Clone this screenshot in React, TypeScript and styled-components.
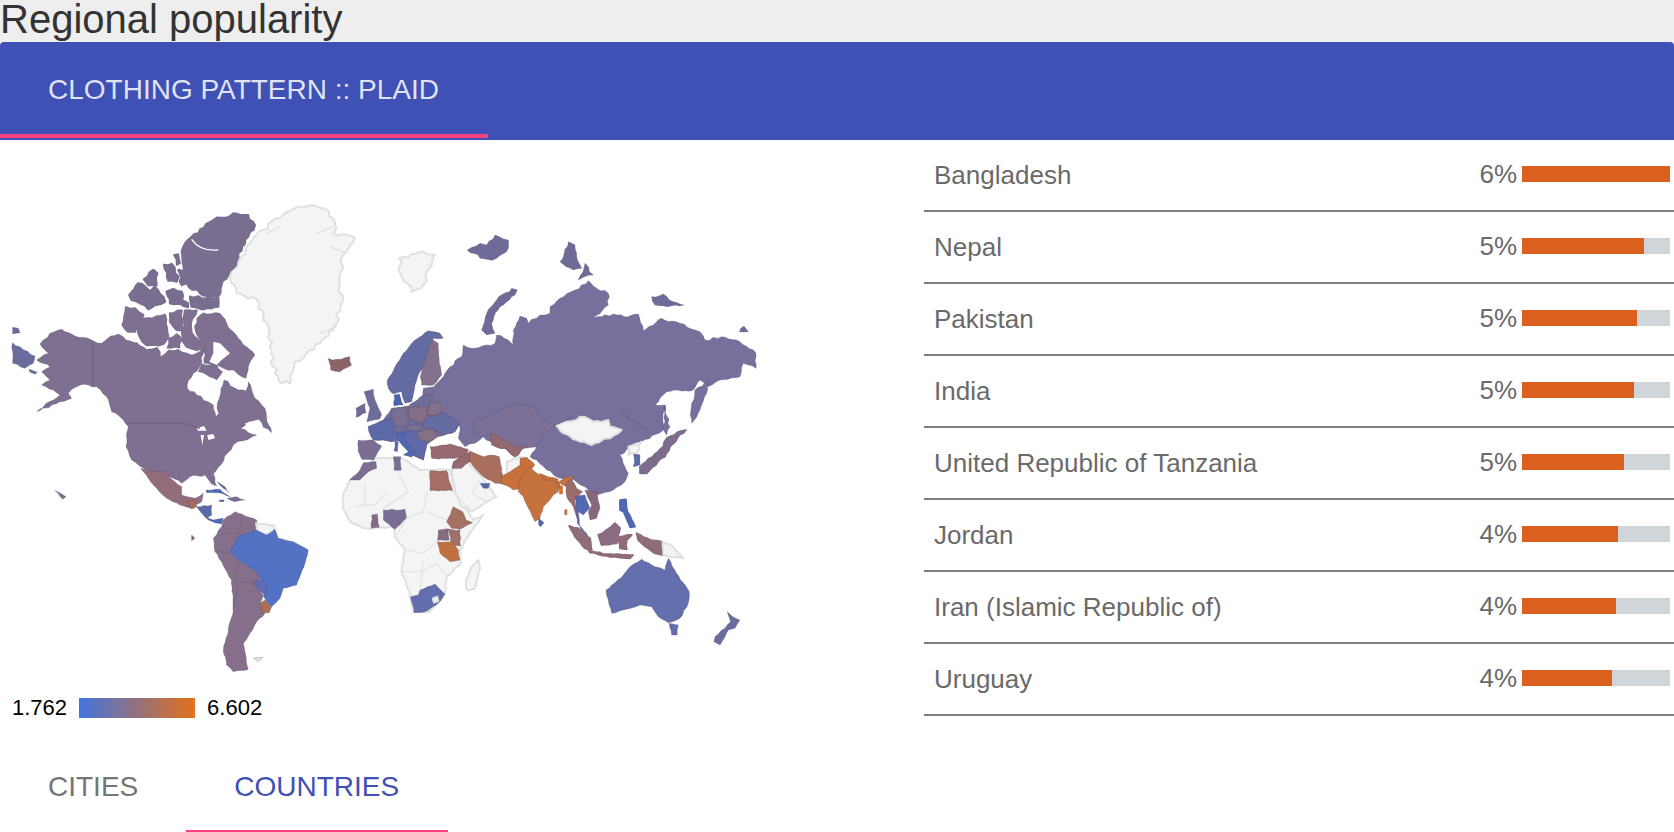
import React, { useState } from 'react';
import styled, { createGlobalStyle } from 'styled-components';

const GlobalStyle = createGlobalStyle`
  html, body {
    margin: 0;
    padding: 0;
    background: #fff;
    font-family: "Liberation Sans", Arial, sans-serif;
  }
`;

// each frame is the crop the outlines were traced on, coordinates are 3x page px
const frames: Record<string, [number, number]> = {
  A: [0, 190],
  B: [380, 190],
  C: [0, 470],
  D: [340, 440],
  E: [340, 320],
  F: [440, 420],
  G: [130, 450],
};

const NONE = '#f4f4f4';

type Shape = { at: string; fill: string; d: string; jag?: number; grow?: number };

// break the straight edges up so the coasts look like coasts
const roughen = (d: string, amp: number) => {
  const nums = (d.match(/-?\d+(\.\d+)?/g) || []).map(Number);
  const pts: [number, number][] = [];
  for (let i = 0; i < nums.length; i += 2) pts.push([nums[i], nums[i + 1]]);
  let seed = nums.length;
  const noise = () => {
    seed += 1;
    const v = Math.sin(seed * 12.9898) * 43758.5453;
    return (v - Math.floor(v) - 0.5) * 2;
  };
  const out: string[] = [];
  pts.forEach(([x, y], i) => {
    const [nx, ny] = pts[(i + 1) % pts.length];
    const len = Math.hypot(nx - x, ny - y);
    const steps = Math.max(1, Math.floor(len / 11));
    for (let k = 0; k < steps; k++) {
      const t = k / steps;
      const off = k === 0 ? 0 : noise() * amp;
      out.push(`${(x + (nx - x) * t + (-(ny - y) / len) * off).toFixed(1)} ${(y + (ny - y) * t + ((nx - x) / len) * off).toFixed(1)}`);
    }
  });
  return `M${out.join(' L')} Z`;
};

const land: Shape[] = [
  // Greenland and Svalbard
  { at: 'A', fill: NONE, jag: 7, d: 'M695 250 L725 200 L750 160 L790 120 L850 75 L900 50 L975 55 L1005 100 L1000 130 L1065 145 L1030 195 L1020 280 L1025 340 L1000 420 L960 460 L920 490 L885 515 L870 580 L845 580 L825 550 L815 480 L800 400 L770 330 L710 310 L695 280 Z' },
  { at: 'B', fill: NONE, jag: 7, d: 'M58 205 L120 185 L165 195 L140 245 L130 285 L95 305 L60 250 Z' },
  // North America
  { at: 'A', fill: '#7f7091', d: 'M185 418 L215 432 L280 452 L305 460 L322 446 L355 432 L378 450 L412 458 L440 478 L472 472 L482 500 L505 480 L535 478 L575 495 L600 484 L612 470 L606 515 L592 542 L565 572 L562 595 L590 615 L625 635 L640 645 L648 680 L656 670 L652 640 L662 610 L672 570 L715 600 L738 602 L745 575 L765 625 L795 655 L800 682 L815 728 L790 712 L775 688 L745 695 L722 716 L770 735 L730 752 L700 765 L682 790 L665 822 L640 852 L650 888 L635 882 L615 855 L570 860 L545 880 L510 860 L470 855 L430 835 L395 810 L378 770 L385 710 L370 690 L335 665 L320 620 L290 590 L265 585 L230 590 L205 610 L215 625 L180 635 L110 665 L180 615 L160 600 L125 585 L150 570 L125 545 L150 530 L110 510 L145 490 L120 462 L150 430 Z' },
  { at: 'A', fill: '#7f7091', d: 'M590 385 L610 368 L660 370 L700 425 L740 470 L765 495 L745 530 L738 565 L700 540 L670 535 L640 525 L612 520 L612 470 L585 420 Z' },
  { at: 'A', fill: '#7f7091', d: 'M605 520 L650 525 L668 545 L650 570 L620 555 L595 545 Z' },
  { at: 'A', fill: '#7a6e90', jag: 6, grow: 6, d: 'M575 140 L600 118 L640 90 L700 70 L745 75 L765 105 L745 140 L715 190 L700 235 L665 285 L655 320 L600 310 L560 280 L545 185 Z' },
  { at: 'A', fill: '#7a6e90', grow: 7, d: 'M570 320 L655 325 L655 350 L610 358 L575 350 Z' },
  { at: 'A', fill: '#7a6e90', grow: 7, d: 'M492 225 L515 222 L535 260 L530 275 L505 272 Z' },
  { at: 'A', fill: '#7a6e90', grow: 7, d: 'M535 240 L555 245 L572 280 L545 285 Z' },
  { at: 'A', fill: '#7a6e90', grow: 5, d: 'M522 195 L535 192 L540 220 L530 225 Z' },
  { at: 'A', fill: '#7a6e90', grow: 7, d: 'M432 268 L460 240 L472 250 L470 285 L445 285 Z' },
  { at: 'A', fill: '#7a6e90', grow: 7, d: 'M388 315 L415 280 L435 290 L450 305 L465 290 L495 335 L465 345 L445 358 L420 340 L395 330 Z' },
  { at: 'A', fill: '#7a6e90', grow: 7, d: 'M500 305 L520 297 L545 305 L550 345 L510 340 Z' },
  { at: 'A', fill: '#7a6e90', grow: 5, d: 'M548 330 L565 340 L565 352 L548 348 Z' },
  { at: 'A', fill: '#7f7091', grow: 7, d: 'M378 352 L405 355 L430 375 L405 425 L385 425 L368 405 Z' },
  { at: 'A', fill: '#7f7091', grow: 7, d: 'M415 390 L445 385 L495 375 L505 440 L490 462 L440 465 L415 430 Z' },
  { at: 'A', fill: '#7f7091', grow: 7, d: 'M510 370 L545 362 L550 420 L530 420 L510 395 Z' },
  { at: 'A', fill: '#7f7091', grow: 7, d: 'M555 362 L590 362 L572 400 L575 430 L612 470 L590 480 L560 470 L548 440 Z' },
  { at: 'A', fill: '#7f7091', d: 'M505 445 L530 430 L548 450 L540 475 L500 475 Z' },
  { at: 'A', fill: '#6a6c9e', d: 'M38 458 L60 470 L105 498 L100 520 L75 535 L38 520 Z' },
  { at: 'A', fill: '#6a6c9e', d: 'M38 412 L55 415 L60 428 L38 432 Z' },
  { at: 'A', fill: '#6a6c9e', d: 'M88 537 L112 547 L105 553 L88 545 Z' },
  { at: 'A', fill: '#8c6468', d: 'M985 505 L1010 508 L1050 500 L1055 525 L1020 545 L992 540 Z' },
  // Africa and Arabia, no data
  { at: 'D', fill: NONE, d: 'M30 120 L110 55 L185 55 L240 90 L330 90 L345 155 L400 240 L430 225 L400 265 L360 330 L362 370 L320 410 L315 460 L270 515 L220 515 L205 450 L185 395 L195 330 L165 290 L160 260 L100 265 L70 265 L30 245 L8 205 L10 160 Z' },
  { at: 'D', fill: NONE, d: 'M335 90 L370 55 L415 100 L470 170 L440 185 L395 215 L365 200 L345 155 Z' },
  { at: 'D', fill: NONE, d: 'M378 445 L378 420 L395 380 L415 360 L420 385 L405 445 L385 452 Z' },
  { at: 'D', fill: '#a66e64', d: 'M270 92 L320 92 L338 152 L270 152 Z' },
  { at: 'D', fill: '#7b6e96', d: 'M130 210 L195 208 L200 235 L165 268 L130 240 Z' },
  { at: 'D', fill: '#846c88', d: 'M95 225 L112 222 L118 262 L94 265 Z' },
  { at: 'D', fill: '#a4705f', d: 'M320 245 L340 200 L368 215 L378 240 L398 248 L360 268 L335 265 Z' },
  { at: 'D', fill: '#a17068', d: 'M325 268 L360 270 L362 318 L335 318 Z' },
  { at: 'D', fill: '#856c80', d: 'M295 270 L325 266 L328 300 L292 302 Z' },
  { at: 'D', fill: '#c0713f', d: 'M292 305 L335 305 L355 330 L360 360 L330 365 L300 340 Z' },
  { at: 'D', fill: '#636eae', d: 'M212 470 L235 465 L240 450 L285 432 L315 462 L295 490 L255 515 L222 518 Z' },
  { at: 'D', fill: NONE, d: 'M278 475 L292 470 L295 483 L282 488 Z' },
  // Europe, the ground under the countries
  { at: 'E', fill: '#6e6d9a', d: 'M85 320 L130 300 L155 265 L205 258 L250 225 L300 200 L330 300 L358 310 L345 335 L290 350 L260 375 L250 420 L215 405 L190 360 L155 365 L130 360 L100 360 Z' },
  // Eurasia
  { at: 'B', fill: '#78709c', d: 'M165 585 L210 530 L245 500 L250 465 L285 475 L345 460 L350 435 L385 450 L400 465 L400 420 L420 378 L440 385 L445 400 L480 375 L510 370 L510 350 L540 325 L585 300 L625 272 L650 295 L685 310 L685 345 L640 385 L700 372 L745 380 L775 372 L790 422 L845 385 L900 400 L960 425 L975 450 L1025 440 L1080 455 L1128 490 L1128 535 L1090 520 L1080 560 L1020 570 L985 590 L960 570 L940 600 L860 605 L825 645 L855 645 L850 720 L785 755 L750 770 L720 795 L735 830 L745 850 L735 875 L700 900 L650 915 L625 900 L580 868 L540 865 L500 840 L470 810 L450 800 L470 770 L430 775 L405 800 L375 775 L340 765 L310 740 L285 760 L255 770 L235 745 L240 710 L190 670 L175 640 L150 620 Z' },
  { at: 'B', fill: '#7d7097', d: 'M275 695 L330 680 L365 655 L420 640 L460 650 L480 680 L525 705 L490 730 L470 770 L430 775 L405 800 L375 775 L340 765 L330 730 L300 740 Z' },
  { at: 'B', fill: '#93696f', d: 'M330 735 L345 730 L370 750 L410 770 L440 765 L405 802 L375 775 L335 765 Z' },
  { at: 'B', fill: NONE, d: 'M528 705 L590 690 L600 680 L640 695 L685 690 L690 710 L725 720 L690 745 L635 765 L600 755 L550 730 Z' },
  { at: 'B', fill: '#78709c', d: 'M935 640 L945 600 L985 570 L980 610 L960 660 L935 700 Z' },
  { at: 'B', fill: '#7e6c8c', grow: 5, d: 'M780 830 L850 770 L860 745 L918 720 L870 770 L855 800 L800 850 L780 850 Z' },
  { at: 'B', fill: '#78709c', d: 'M855 645 L870 710 L860 735 L850 720 Z' },
  { at: 'B', fill: '#5a6aaa', d: 'M760 790 L780 795 L780 825 L760 830 Z' },
  { at: 'B', fill: NONE, d: 'M745 770 L785 755 L770 790 L745 795 Z' },
  { at: 'B', fill: '#6f6b98', d: 'M305 420 L320 370 L350 330 L395 295 L412 300 L405 315 L360 350 L335 400 L345 430 L320 435 Z' },
  { at: 'B', fill: '#6f6b98', jag: 6, d: 'M262 180 L300 160 L320 165 L345 135 L385 150 L385 175 L350 205 L300 205 Z' },
  { at: 'B', fill: '#6f6b98', d: 'M540 215 L565 155 L585 165 L590 200 L605 235 L580 240 Z' },
  { at: 'B', fill: '#6f6b98', d: 'M595 270 L615 220 L640 255 L610 262 Z' },
  { at: 'B', fill: '#6f6b98', d: 'M815 320 L850 312 L880 335 L912 345 L860 350 L825 345 Z' },
  { at: 'B', fill: '#6f6b98', d: 'M1078 425 L1092 408 L1105 425 Z' },
  // Europe
  { at: 'E', fill: '#646ba3', d: 'M142 180 L165 140 L190 100 L225 60 L265 32 L300 40 L310 55 L280 55 L262 105 L262 125 L240 155 L225 195 L215 245 L195 250 L185 215 L160 222 L145 205 Z' },
  { at: 'E', fill: '#82708c', d: 'M262 100 L275 58 L295 70 L298 130 L305 165 L280 195 L245 195 L240 170 Z' },
  { at: 'E', fill: '#4c64ac', d: 'M162 225 L178 222 L190 255 L162 258 Z' },
  { at: 'E', fill: '#7a6f96', d: 'M250 205 L282 200 L280 225 L248 225 Z' },
  { at: 'E', fill: '#85708b', d: 'M270 248 L295 245 L310 270 L290 290 L262 285 Z' },
  { at: 'E', fill: '#656ca2', d: 'M252 290 L290 285 L320 280 L358 310 L345 335 L310 345 L275 325 L250 320 Z' },
  { at: 'E', fill: '#856f87', d: 'M205 262 L260 258 L262 290 L248 310 L205 295 Z' },
  { at: 'E', fill: '#7a6f92', d: 'M155 265 L200 260 L205 300 L195 320 L155 320 Z' },
  { at: 'E', fill: '#6e6d9a', d: 'M48 265 L75 250 L78 278 L48 292 Z' },
  { at: 'E', fill: '#6e6d9a', d: 'M72 215 L100 208 L105 240 L125 285 L118 298 L80 305 L90 265 Z' },
  { at: 'E', fill: '#5b69a8', d: 'M85 320 L130 300 L155 295 L165 320 L155 365 L130 360 L100 360 L85 330 Z' },
  { at: 'E', fill: '#7b6e92', d: 'M55 360 L100 360 L125 378 L100 420 L65 418 L55 395 Z' },
  { at: 'E', fill: '#7b6e92', d: 'M30 480 L60 450 L70 428 L108 425 L110 445 L85 455 L60 480 Z' },
  { at: 'E', fill: '#7b6e92', d: 'M160 410 L182 410 L184 450 L162 450 Z' },
  { at: 'E', fill: '#5d69a8', d: 'M190 330 L240 330 L260 370 L250 420 L215 400 L190 360 Z' },
  { at: 'E', fill: '#5168b0', d: 'M165 335 L200 340 L190 355 L225 395 L215 412 L190 405 L205 395 L170 355 Z' },
  { at: 'E', fill: '#5168b0', d: 'M165 365 L175 365 L172 395 L162 392 Z' },
  { at: 'E', fill: '#857084', d: 'M230 335 L280 325 L295 350 L265 365 L235 358 Z' },
  { at: 'E', fill: '#7f7090', d: 'M205 315 L250 315 L230 335 L200 330 Z' },
  { at: 'E', fill: '#96696f', d: 'M270 380 L330 372 L385 388 L380 410 L330 415 L275 415 Z' },
  // Middle East and South Asia
  { at: 'F', fill: NONE, d: 'M200 125 L240 110 L260 115 L240 140 L200 165 Z' },
  { at: 'F', fill: '#96696f', d: 'M60 110 L90 95 L90 125 L65 145 L35 145 L40 125 Z' },
  { at: 'F', fill: '#aa6e5c', d: 'M88 92 L105 100 L130 110 L150 105 L178 110 L185 155 L195 195 L165 190 L130 170 L110 150 L90 125 Z' },
  { at: 'F', fill: '#5068b0', d: 'M120 190 L150 190 L145 205 L130 205 Z' },
  { at: 'F', fill: '#c8703a', d: 'M185 170 L240 135 L240 115 L260 112 L285 135 L265 155 L245 205 L220 210 L185 190 Z' },
  { at: 'F', fill: '#c5723f', d: 'M240 175 L270 140 L300 165 L355 185 L395 165 L400 175 L380 200 L360 190 L355 215 L340 225 L310 260 L300 295 L285 305 L265 265 L250 230 L235 215 Z' },
  { at: 'F', fill: '#c8703a', d: 'M298 160 L355 178 L352 190 L310 178 Z' },
  { at: 'F', fill: '#e06c1c', d: 'M355 195 L368 198 L368 222 L358 222 Z' },
  { at: 'F', fill: '#d8702c', d: 'M374 270 L381 268 L381 284 L374 284 Z' },
  { at: 'F', fill: '#9a6c6a', d: 'M378 190 L395 175 L410 205 L428 215 L405 240 L410 290 L400 260 L380 230 Z' },
  // South East Asia and Oceania
  { at: 'D', fill: '#5068a8', d: 'M596 235 L612 248 L602 260 L596 255 Z' },
  { at: 'D', fill: '#86687a', d: 'M735 150 L770 155 L780 205 L770 235 L750 240 L745 215 L755 195 Z' },
  { at: 'D', fill: '#5468b0', d: 'M705 170 L735 165 L750 205 L730 225 L715 215 L718 255 L745 290 L735 290 L712 250 Z' },
  { at: 'D', fill: '#8f6c7a', grow: 6, d: 'M688 258 L715 265 L750 295 L755 330 L735 325 L705 290 Z' },
  { at: 'D', fill: '#8f6c7a', grow: 5, d: 'M745 330 L800 342 L880 345 L870 355 L800 348 L750 338 Z' },
  { at: 'D', fill: '#8b6b80', grow: 6, d: 'M775 285 L800 270 L825 250 L840 265 L830 310 L785 315 Z' },
  { at: 'D', fill: '#8f6c7a', grow: 6, d: 'M835 290 L875 285 L860 300 L860 328 L840 325 Z' },
  { at: 'D', fill: '#8f6c7a', grow: 6, d: 'M890 280 L930 300 L965 305 L968 345 L945 340 L925 325 L895 300 Z' },
  { at: 'D', fill: NONE, d: 'M968 305 L1000 320 L1030 355 L990 350 L970 345 Z' },
  { at: 'D', fill: '#5068b0', grow: 5, d: 'M840 180 L858 178 L860 205 L885 260 L870 262 L850 215 L840 210 Z' },
  { at: 'D', fill: '#646fae', d: 'M798 450 L850 405 L870 380 L905 358 L945 380 L975 390 L985 355 L1010 400 L1048 455 L1045 490 L1020 535 L985 548 L955 530 L935 500 L900 495 L850 510 L815 520 L805 480 Z' },
  { at: 'D', fill: '#646fae', d: 'M988 550 L1015 555 L1012 585 L995 585 Z' },
  { at: 'D', fill: '#6a6c9e', d: 'M1162 515 L1178 530 L1200 540 L1185 565 L1165 570 L1140 615 L1122 605 L1125 590 L1155 565 L1172 545 Z' },
  // Central America and the Caribbean
  { at: 'G', fill: '#926c7a', d: 'M32 55 L70 65 L105 65 L135 95 L155 110 L155 135 L195 145 L220 130 L215 155 L195 165 L180 175 L150 165 L110 145 L80 115 L55 85 Z' },
  { at: 'G', fill: '#5068b8', d: 'M228 120 L270 118 L300 140 L265 128 L230 128 Z' },
  { at: 'G', fill: '#7c6c94', d: 'M292 145 L320 140 L345 150 L315 155 Z' },
  { at: 'G', fill: '#5068b8', d: 'M268 150 L282 150 L282 155 L268 155 Z' },
  { at: 'G', fill: '#5068b8', d: 'M262 95 L285 110 L298 128 L280 115 Z' },
  { at: 'G', fill: '#a86c58', d: 'M170 155 L195 150 L200 170 L185 178 Z' },
  { at: 'G', fill: '#5a6aa8', d: 'M200 170 L245 165 L245 195 L230 205 L215 190 Z' },
  { at: 'G', fill: '#4f68b8', d: 'M220 195 L250 210 L280 205 L275 222 L255 218 L235 210 Z' },
  // South America
  { at: 'C', fill: '#856f8a', d: 'M705 125 L770 150 L770 185 L720 200 L695 250 L715 270 L770 305 L785 320 L760 340 L790 375 L780 400 L795 430 L770 455 L750 490 L730 520 L745 598 L700 605 L680 585 L670 540 L685 480 L700 420 L695 330 L645 245 L640 205 L665 170 L670 150 Z' },
  { at: 'C', fill: NONE, d: 'M768 160 L820 165 L825 178 L800 195 L770 185 Z' },
  { at: 'C', fill: '#5472c4', jag: 1, d: 'M770 180 L800 195 L825 178 L835 205 L880 215 L925 240 L915 280 L890 345 L850 355 L840 385 L815 410 L800 395 L790 378 L800 360 L782 325 L770 305 L715 270 L690 245 L715 200 Z' },
  { at: 'C', fill: '#5f6cb4', d: 'M755 335 L785 325 L805 355 L795 375 L775 360 Z' },
  { at: 'C', fill: '#ad6e58', jag: 1, d: 'M780 400 L795 390 L815 410 L808 428 L785 428 Z' },
  { at: 'C', fill: '#e4e4e4', d: 'M760 565 L788 562 L775 575 Z' },
  { at: 'C', fill: '#8c6468', d: 'M575 195 L585 205 L575 212 Z' },
  { at: 'C', fill: '#7a6e90', d: 'M165 62 L198 80 L188 88 Z' },
];

// gaps in the land, painted in the page colour
const water: Shape[] = [
  { at: 'A', fill: '#fff', d: 'M640 455 L660 460 L690 490 L665 510 L650 525 L628 515 L640 490 Z' },
  { at: 'A', fill: '#fff', d: 'M590 715 L612 708 L620 722 L595 722 Z' },
  { at: 'A', fill: '#fff', d: 'M602 735 L607 765 L612 735 Z' },
  { at: 'A', fill: '#fff', d: 'M622 735 L640 732 L645 745 L625 750 Z' },
  { at: 'A', fill: '#fff', d: 'M735 700 L780 690 L755 725 Z' },
  { at: 'E', fill: '#fff', d: 'M240 170 L262 125 L245 160 L225 215 L215 245 L235 205 Z' },
];

// borders inside a shape, [frame, colour, path]
const borders: [string, string, string][] = [
  ['A', '#6f6480', 'M278 455 L278 585'],
  ['A', '#6f6480', 'M385 700 L555 700 L600 715'],
  ['A', '#fff', 'M575 148 Q600 185 655 180'],
  ['A', '#e0e0e0', 'M800 130 L840 110 M950 130 L1000 110 M990 170 L1040 190 M960 430 L1010 410'],
  ['D', '#e4e4e4', 'M75 130 L75 195 L45 200 M140 155 L105 195 L60 195 M175 100 L205 155 L130 205 M262 152 L250 215 L200 235 L170 285 M262 215 L320 240 M200 330 L250 340 L295 300 M190 395 L245 395 L290 370 L320 410 M240 450 L250 365 M340 155 L395 215'],
  ['D', '#e4e4e4', 'M420 120 L395 160 L440 185'],
  ['C', '#776a80', 'M665 190 L715 190 L725 150 M645 240 L690 250 M715 270 L705 335 L765 340 M700 420 L715 345'],
  ['B', '#6c6590', 'M720 665 L800 720 M525 705 L580 680'],
];

type Row = { name: string; pct: string; bar: number };

const rows: Row[] = [
  { name: 'Bangladesh', pct: '6%', bar: 148 },
  { name: 'Nepal', pct: '5%', bar: 122 },
  { name: 'Pakistan', pct: '5%', bar: 115 },
  { name: 'India', pct: '5%', bar: 112 },
  { name: 'United Republic of Tanzania', pct: '5%', bar: 102 },
  { name: 'Jordan', pct: '4%', bar: 96 },
  { name: 'Iran (Islamic Republic of)', pct: '4%', bar: 94 },
  { name: 'Uruguay', pct: '4%', bar: 90 },
];

const Page = styled.div`
  width: 1674px;
  height: 832px;
  overflow: hidden;
  background: #fff;
`;

const TitleBar = styled.div`
  height: 42px;
  background: #eeeeee;
`;

const Title = styled.h1`
  margin: 0;
  font-size: 40px;
  line-height: 38px;
  font-weight: 400;
  color: #333;
`;

const Header = styled.div`
  height: 98px;
  background: #3f51b5;
  border-radius: 4px 4px 0 0;
`;

const HeaderTab = styled.div`
  width: 488px;
  height: 96px;
  box-sizing: border-box;
  padding: 3px 48px 0;
  display: flex;
  align-items: center;
  border-bottom: 4px solid #ff4081;
  color: rgba(255, 255, 255, 0.85);
  font-size: 28px;
`;

const Content = styled.div`
  display: flex;
  height: 692px;
`;

const Left = styled.div`
  width: 924px;
  flex: none;
`;

const MapBox = styled.svg`
  display: block;
  width: 800px;
  height: 540px;
  filter: blur(0.35px);
`;

const Legend = styled.div`
  display: flex;
  align-items: center;
  gap: 12px;
  height: 20px;
  margin: 18px 0 22px;
  padding-left: 12px;
  font-size: 22px;
  color: #000;
`;

const LegendBar = styled.div`
  width: 116px;
  height: 20px;
  background: linear-gradient(to right, #4374e0, #e4701a);
`;

const Tabs = styled.div`
  display: flex;
`;

const Tab = styled.button<{ $active?: boolean }>`
  height: 92px;
  padding: 3px 49px 0 48px;
  margin-right: -1px;
  border: 0;
  border-bottom: 2px solid ${(p) => (p.$active ? '#ff4081' : 'transparent')};
  background: none;
  font-family: inherit;
  font-size: 28px;
  color: ${(p) => (p.$active ? '#3f51b5' : '#757575')};
  cursor: pointer;
`;

const List = styled.div`
  flex: 1;
`;

const ListRow = styled.div`
  display: flex;
  align-items: center;
  height: 72px;
  box-sizing: border-box;
  padding: 0 4px 2px 10px;
  border-bottom: 2px solid #808080;
  color: #6a6a6a;
  font-size: 26px;
`;

const Name = styled.div`
  flex: 1;
  padding-top: 2px;
`;

const Pct = styled.div`
  margin-right: 5px;
  padding-top: 1px;
`;

const Track = styled.div`
  width: 148px;
  height: 16px;
  background: #cfd5d9;
`;

const Fill = styled.div`
  height: 100%;
  background: #dc601d;
`;

const App = () => {
  const [tab, setTab] = useState('countries');

  const place = (at: string) => `translate(${frames[at][0]} ${frames[at][1]}) scale(0.3333)`;

  return (
    <Page>
      <GlobalStyle />
      <TitleBar>
        <Title>Regional popularity</Title>
      </TitleBar>
      <Header>
        <HeaderTab>CLOTHING PATTERN :: PLAID</HeaderTab>
      </Header>
      <Content>
        <Left>
          <MapBox viewBox="0 140 800 540">
            {land.map((s, i) => (
              <path
                key={i}
                transform={place(s.at)}
                d={roughen(s.d, s.jag ?? (s.at === 'A' || s.at === 'B' ? 4 : 2))}
                fill={s.fill}
                stroke={s.fill === NONE ? '#e0e0e0' : s.grow ? s.fill : 'rgba(70, 60, 90, 0.25)'}
                strokeWidth={s.fill === NONE ? 6 : s.grow ?? 3}
                strokeLinejoin="round"
              />
            ))}
            {water.map((s, i) => (
              <path key={i} transform={place(s.at)} d={s.d} fill={s.fill} />
            ))}
            {borders.map(([at, colour, d], i) => (
              <path key={i} transform={place(at)} d={d} fill="none" stroke={colour} strokeWidth={4} />
            ))}
          </MapBox>
          <Legend>
            <span>1.762</span>
            <LegendBar />
            <span>6.602</span>
          </Legend>
          <Tabs>
            <Tab $active={tab === 'cities'} onClick={() => setTab('cities')}>CITIES</Tab>
            <Tab $active={tab === 'countries'} onClick={() => setTab('countries')}>COUNTRIES</Tab>
          </Tabs>
        </Left>
        <List>
          {rows.map((r) => (
            <ListRow key={r.name}>
              <Name>{r.name}</Name>
              <Pct>{r.pct}</Pct>
              <Track>
                <Fill style={{ width: r.bar }} />
              </Track>
            </ListRow>
          ))}
        </List>
      </Content>
    </Page>
  );
};

export default App;
